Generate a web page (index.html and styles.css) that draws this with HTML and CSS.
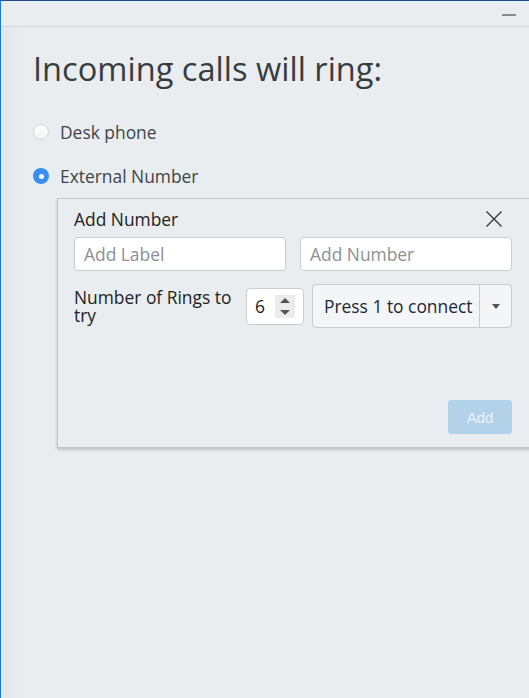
FILE: index.html
```html
<!DOCTYPE html>
<html lang="en">
<head>
<meta charset="utf-8">
<title>Incoming calls</title>
<link rel="stylesheet" href="styles.css">
</head>
<body>
<div class="window">
  <div class="titlebar">
    <span class="minimize"></span>
  </div>
  <div class="content">
    <h1 class="title">Incoming calls will ring:</h1>
    <div class="option">
      <span class="radio"></span>
      <span class="option-label">Desk phone</span>
    </div>
    <div class="option">
      <span class="radio radio-checked"></span>
      <span class="option-label">External Number</span>
    </div>
    <div class="panel">
      <div class="panel-head">
        <span class="panel-title">Add Number</span>
        <svg class="close" width="18" height="18" viewBox="0 0 18 18"><path d="M1.5 1.5 L16.5 16.5 M16.5 1.5 L1.5 16.5" stroke="#333" stroke-width="1.3" fill="none"/></svg>
      </div>
      <div class="inputs">
        <div class="field placeholder">Add Label</div>
        <div class="field placeholder">Add Number</div>
      </div>
      <div class="rings">
        <div class="rings-label">Number of Rings to try</div>
        <div class="spinner">
          <span class="spin-value">6</span>
          <span class="spin-arrows">
            <svg width="20" height="23" viewBox="0 0 20 23"><path d="M5 8 L10 3 L15 8 Z" fill="#555"/><path d="M5 15 L10 20 L15 15 Z" fill="#555"/></svg>
          </span>
        </div>
        <div class="select">
          <span class="select-text">Press 1 to connect</span>
          <span class="select-caret">
            <svg width="8" height="5" viewBox="0 0 8 5"><path d="M0 0 L8 0 L4 5 Z" fill="#555"/></svg>
          </span>
        </div>
      </div>
      <div class="actions">
        <button class="add-btn">Add</button>
      </div>
    </div>
  </div>
</div>
</body>
</html>
```
FILE: styles.css
```css
html, body {
  margin: 0;
  padding: 0;
}
body {
  width: 529px;
  height: 698px;
  overflow: hidden;
  background: #e9edf0;
  font-family: "Open Sans", "Noto Sans", sans-serif;
}
.window {
  box-sizing: border-box;
  width: 529px;
  height: 698px;
  border-top: 1px solid #1d4d8f;
  border-left: 1px solid #1a78dc;
  background: linear-gradient(to right, #e3e7ea 0px, #e9edf0 22px);
  overflow: hidden;
}
.titlebar {
  height: 25px;
  border-bottom: 1px solid #d4d9dc;
  display: flex;
  justify-content: flex-end;
  align-items: flex-start;
  background: #e9edf0;
}
.minimize {
  width: 14px;
  height: 2px;
  background: #8a8a8a;
  margin-top: 13px;
  margin-right: 13px;
}
.content {
  padding-left: 32px;
}
.title {
  margin: 22px 0 0 0;
  font-size: 32.6px;
  line-height: 40px;
  font-weight: 400;
  color: #383c40;
}
.option {
  display: flex;
  align-items: center;
  gap: 11px;
  height: 44px;
}
.option:first-of-type {
  margin-top: 21px;
}
.option-label {
  font-size: 17.4px;
  color: #404549;
}
.radio {
  box-sizing: border-box;
  width: 16px;
  height: 16px;
  border-radius: 50%;
  border: 1px solid #d2d6d9;
  background: linear-gradient(#ffffff, #f3f4f5);
  display: flex;
  align-items: center;
  justify-content: center;
}
.radio-checked {
  border: none;
  background: #3a8eef;
}
.radio-checked::after {
  content: "";
  width: 5px;
  height: 5px;
  border-radius: 50%;
  background: #fff;
}
.panel {
  box-sizing: border-box;
  margin-left: 24px;
  margin-top: 0;
  width: 490px;
  height: 250px;
  border: 1px solid #c3c7ca;
  background: #e9edf0;
  box-shadow: 0 2px 3px rgba(0, 0, 0, 0.18);
  padding: 8px 17px 13px 16px;
  display: flex;
  flex-direction: column;
}
.panel-head {
  width: 438px;
  height: 24px;
  display: flex;
  align-items: center;
  justify-content: space-between;
}
.panel-title {
  font-size: 17.4px;
  line-height: 24px;
  color: #222;
}
.close {
  margin-right: 9px;
}
.inputs {
  width: 438px;
  margin-top: 6px;
  display: flex;
  gap: 14px;
}
.field {
  box-sizing: border-box;
  flex: 1;
  height: 34px;
  border: 1px solid #c9cdd1;
  border-radius: 4px;
  background: #fff;
  padding-left: 9px;
  font-size: 17.4px;
  line-height: 32px;
}
.placeholder {
  color: #8c9196;
}
.rings {
  width: 438px;
  margin-top: 13px;
  display: flex;
  align-items: center;
}
.rings-label {
  width: 172px;
  font-size: 17.4px;
  line-height: 18px;
  color: #222;
}
.spinner {
  box-sizing: border-box;
  width: 58px;
  height: 37px;
  border: 1px solid #c9cdd1;
  border-radius: 4px;
  background: #fff;
  display: flex;
  align-items: center;
  padding-left: 8px;
}
.spin-value {
  font-size: 17.4px;
  color: #222;
  width: 20px;
}
.spin-arrows {
  display: flex;
  background: #ececec;
  width: 20px;
  height: 23px;
}
.select {
  box-sizing: border-box;
  margin-left: 8px;
  width: 200px;
  height: 44px;
  border: 1px solid #c9cdd1;
  border-radius: 4px;
  background: #f3f5f7;
  display: flex;
  align-items: center;
}
.select-text {
  flex: 1;
  padding-left: 11px;
  font-size: 17.4px;
  color: #1c2836;
  white-space: nowrap;
}
.select-caret {
  width: 31px;
  align-self: stretch;
  border-left: 1px solid #c9cdd1;
  display: flex;
  align-items: center;
  justify-content: center;
}
.actions {
  width: 438px;
  margin-top: auto;
  display: flex;
  justify-content: flex-end;
}
.add-btn {
  width: 64px;
  height: 34px;
  border: none;
  border-radius: 3px;
  background: #b2d2ea;
  color: #eaf2f9;
  font-family: "Liberation Sans", Arial, sans-serif;
  font-size: 15px;
  padding: 0;
}
```
